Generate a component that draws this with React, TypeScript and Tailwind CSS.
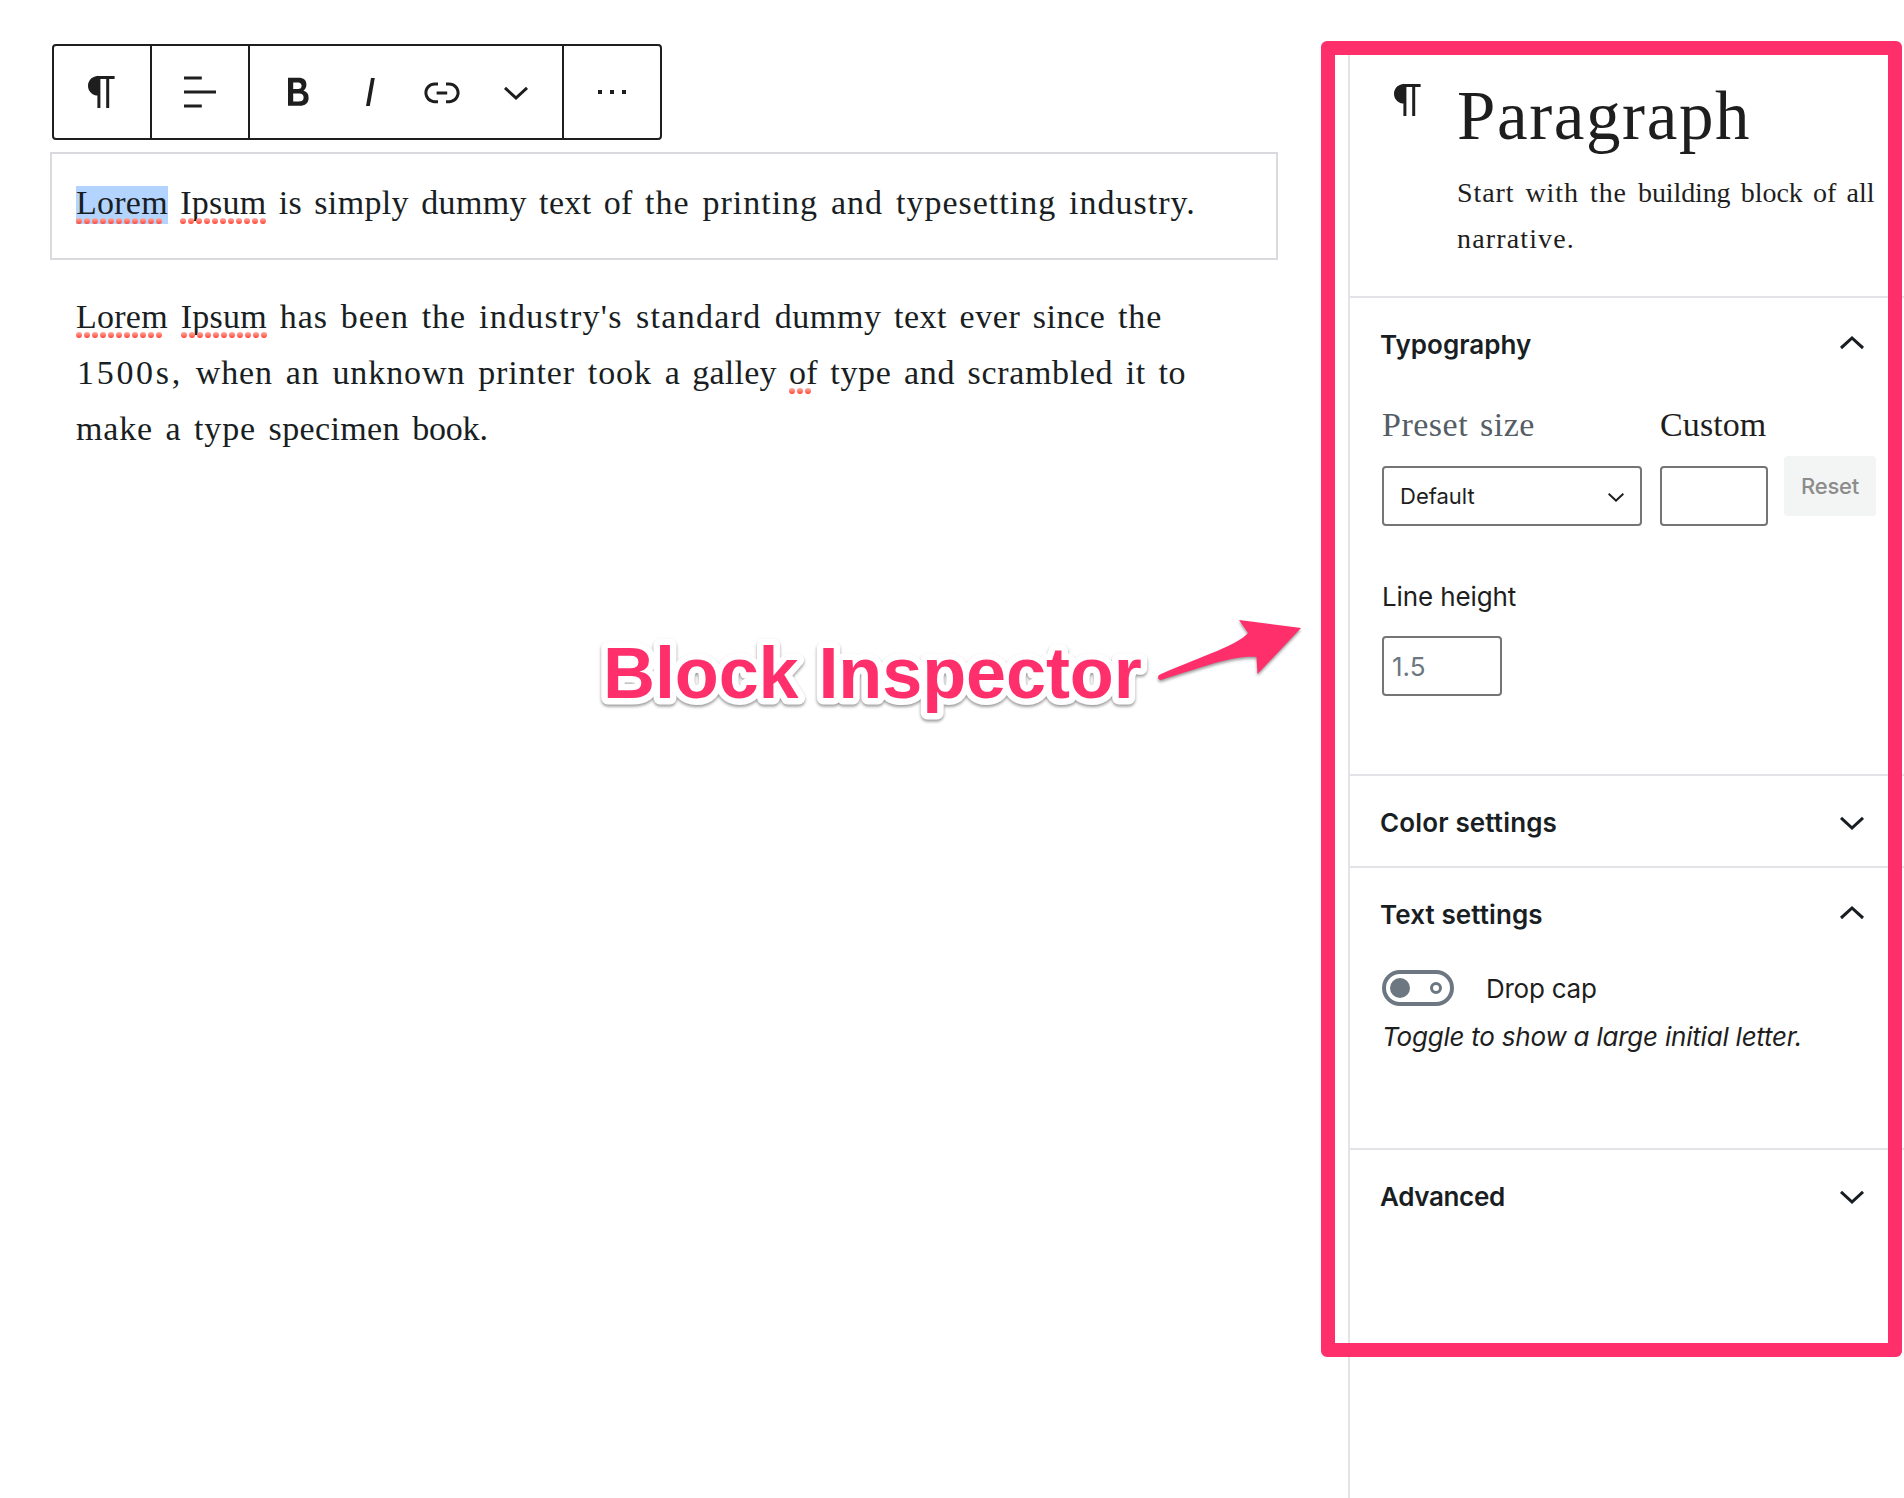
import React from 'react';

const PATHS = {
  paragraph: 'M18.3 4H9.9v-.1l-.9.2c-2.3.4-4 2.4-4 4.8s1.7 4.4 4 4.8l.7.1V20h1.5V5.5h2.9V20h1.5V5.5h2.7V4z',
  align: 'M4 19.8h8.9v-1.5H4v1.5zm8.9-15.6H4v1.5h8.9V4.2zm-8.9 7v1.5h16v-1.5H4z',
  bold: 'M14.7 11.3c1-.6 1.5-1.6 1.5-3 0-2.3-1.3-3.4-4-3.4H7v14h5.8c1.4 0 2.5-.3 3.3-1 .8-.7 1.2-1.7 1.2-2.9.1-1.9-.8-3.1-2.6-3.7zm-5.1-4h2.3c.6 0 1.1.1 1.4.4.3.3.5.7.5 1.2s-.2 1-.5 1.2c-.3.3-.8.4-1.4.4H9.6V7.3zm4.6 9c-.4.3-1 .4-1.7.4H9.6v-3.9h2.9c.7 0 1.3.2 1.7.5.4.3.6.8.6 1.5s-.2 1.2-.6 1.5z',
  italic: 'M12.5 5L10 19h1.9l2.5-14z',
  link: 'M15.6 7.2H14v1.5h1.6c2 0 3.7 1.7 3.7 3.7s-1.7 3.7-3.7 3.7H14v1.5h1.6c2.8 0 5.2-2.3 5.2-5.2 0-2.9-2.3-5.2-5.2-5.2zM4.7 12.4c0-2 1.7-3.7 3.7-3.7H10V7.2H8.4c-2.9 0-5.2 2.3-5.2 5.2 0 2.9 2.3 5.2 5.2 5.2H10v-1.5H8.4c-2 0-3.7-1.7-3.7-3.7zm4.6.9h5.3v-1.5H9.3v1.5z',
  down: 'M17 9.4L12 14 7 9.4l-1 1.1 6 5.5 6-5.5z',
  up: 'M12 8l-6 5.4 1 1.2 5-4.6 5 4.6 1-1.2z',
  more: 'M13 11h-2v2h2v-2zm6 0h-2v2h2v-2zm-12 0H5v2h2v-2z',
};

function Icon({ name, className = 'size-12' }: { name: keyof typeof PATHS; className?: string }) {
  return (
    <svg viewBox="0 0 24 24" fill="currentColor" className={`shrink-0 ${className}`} aria-hidden="true">
      <path d={PATHS[name]} />
    </svg>
  );
}

function ToolButton({ name, className = 'w-[72px]' }: { name: keyof typeof PATHS; className?: string }) {
  return (
    <button type="button" className={`flex h-full items-center justify-center ${className}`}>
      <Icon name={name} />
    </button>
  );
}

function Toolbar() {
  return (
    <div className="ml-[52px] flex h-24 w-[610px] divide-x-2 divide-[#1e1e1e] rounded border-2 border-[#1e1e1e] text-[#1e1e1e]">
      <ToolButton name="paragraph" className="w-[98px]" />
      <ToolButton name="align" className="w-[98px]" />
      <div className="flex w-[314px] pl-3">
        <ToolButton name="bold" />
        <ToolButton name="italic" />
        <ToolButton name="link" />
        <ToolButton name="down" className="w-[76px]" />
      </div>
      <ToolButton name="more" className="flex-1" />
    </div>
  );
}

function Misspelled({ children, dots, selected = false }: { children: string; dots: number; selected?: boolean }) {
  return (
    <span
      className={`relative inline-block pb-[5px] leading-[33px] tracking-[0.25px] [word-spacing:0] ${selected ? 'bg-[#b3d4fe]' : ''}`}
    >
      {children}
      <span className="absolute bottom-0 left-0 flex gap-0.5">
        {Array.from({ length: dots }, (_, i) => (
          <span key={i} className="size-1.5 rounded-full bg-linear-to-b from-[#ffa9a2] to-[#ff3b30]" />
        ))}
      </span>
    </span>
  );
}

function Section({ title, open, tracking = '', className = '', children }: { title: string; open?: boolean; tracking?: string; className?: string; children?: React.ReactNode }) {
  return (
    <section className={className}>
      <div className="flex h-[90px] items-center justify-between pt-0.5 pr-7 pl-[30px] text-[#191e23]">
        <h2 className={`mt-0.5 text-[26px] leading-8 font-semibold ${tracking}`}>{title}</h2>
        <Icon name={open ? 'up' : 'down'} />
      </div>
      {children}
    </section>
  );
}

function Inspector() {
  return (
    <aside className="mt-12 flex flex-1 flex-col border-l-2 border-[#e2e4e7] text-[#1e1e1e]">
      <header className="flex h-[250px] border-b-2 border-[#e2e4e7] pl-[34px] font-['Liberation_Serif',serif]">
        <Icon name="paragraph" className="mt-7 size-12" />
        <div className="ml-[25px] pt-[30px]">
          <h1 className="text-[69px] leading-[76px] tracking-[1.6px]">Paragraph</h1>
          <p className="mt-4 text-[28px] leading-[46px] whitespace-nowrap">
            <span className="block [word-spacing:3.2px]">
              <span className="tracking-[0.9px]">Start with the </span>
              <span className="tracking-[-0.1px]">building </span>
              <span>block of all</span>
            </span>
            <span className="block tracking-[1.15px]">narrative.</span>
          </p>
        </div>
      </header>

      <Section title="Typography" open className="h-[478px] border-b-2 border-[#e2e4e7]">
        <div className="flex pt-[17px] pl-8">
          <div className="w-[260px]">
            <div className="font-['Liberation_Serif',serif] text-[34px] leading-10 tracking-[0.5px] text-[#555d66] [word-spacing:3px]">
              Preset size
            </div>
            <div className="mt-[21px] flex h-[60px] items-center justify-between rounded border-2 border-[#757575] pr-4 pl-4">
              <span className="text-[22px] leading-7">Default</span>
              <svg viewBox="6 9.4 12 6.6" fill="currentColor" className="mt-0.5 h-[9px] w-4" aria-hidden="true">
                <path d={PATHS.down} />
              </svg>
            </div>
          </div>
          <div className="ml-[18px] w-[108px]">
            <div className="font-['Liberation_Serif',serif] text-[34px] leading-10 tracking-[0.1px]">Custom</div>
            <div className="mt-[21px] h-[60px] rounded border-2 border-[#757575]" />
          </div>
          <button
            type="button"
            className="mt-[51px] ml-4 h-[60px] w-[92px] rounded bg-[#f3f4f4] text-[22px] leading-7 font-medium tracking-[-0.2px] text-[#8c8c8c]"
          >
            Reset
          </button>
        </div>
        <div className="pt-[55px] pl-8">
          <div className="text-[26px] leading-8 tracking-[-0.12px]">Line height</div>
          <div className="mt-[23px] flex h-[60px] w-[120px] items-center rounded border-2 border-[#757575] pt-0.5 pl-2 text-[26px] leading-8 text-[#6c7781]">
            1.5
          </div>
        </div>
      </Section>

      <Section title="Color settings" tracking="tracking-[0.15px]" className="h-[92px] border-b-2 border-[#e2e4e7]" />

      <Section title="Text settings" tracking="tracking-[0.1px]" open className="h-[282px] border-b-2 border-[#e2e4e7]">
        <div className="flex items-center pt-3 pl-8">
          <div className="flex h-9 w-[72px] items-center justify-between rounded-full border-4 border-[#6c7781] pr-2 pl-1">
            <span className="size-5 rounded-full bg-[#6c7781]" />
            <span className="size-3 rounded-full border-[3px] border-[#6c7781]" />
          </div>
          <span className="ml-8 pt-0.5 text-[26px] leading-8 tracking-[-0.25px]">Drop cap</span>
        </div>
        <p className="mt-[15px] pl-8 text-[26px] leading-8 tracking-[-0.22px] italic">Toggle to show a large initial letter.</p>
      </Section>

      <Section title="Advanced" tracking="tracking-[-0.35px]" />
    </aside>
  );
}

export default function App() {
  return (
    <div className="relative flex h-[1498px] w-[1904px] overflow-hidden bg-white font-[Inter,sans-serif]">
      <main className="w-[1348px] pt-11">
        <Toolbar />
        <div className="mt-3 ml-[50px] h-[108px] w-[1228px] border-2 border-[#d9dade] pt-[21px] pl-6 font-['Liberation_Serif',serif] text-[34px] leading-[56px] whitespace-nowrap text-[#191e23]">
          <p className="[word-spacing:3.4px]">
            <span className="tracking-[0.35px]">
              <Misspelled dots={11} selected>Lorem</Misspelled> <Misspelled dots={11}>Ipsum</Misspelled>
              {' is simply dummy text of '}
            </span>
            <span className="tracking-[1px]">the printing and typesetting industry.</span>
          </p>
        </div>
        <p className="mt-[29px] ml-[76px] font-['Liberation_Serif',serif] text-[34px] leading-[56px] whitespace-nowrap text-[#191e23] [word-spacing:3.4px]">
          <span className="block tracking-[0.95px]">
            <Misspelled dots={11}>Lorem</Misspelled> <Misspelled dots={11}>Ipsum</Misspelled>
            {' has been the '}
            <span className="tracking-[1.3px]">industry's standard </span>
            <span className="tracking-[0.56px]">dummy text ever since </span>
            the
          </span>
          <span className="block pl-px tracking-[0.65px]">
            <span className="tracking-[2.7px]">1500s,</span>
            <span className="tracking-[0.9px]"> when an unknown printer took </span>
            <span className="tracking-[0.25px]">a galley </span>
            <Misspelled dots={3}>of</Misspelled>
            {' type and scrambled it to'}
          </span>
          <span className="block tracking-[0.37px]">
            <span className="tracking-[0.8px]">make a type </span>specimen <span className="tracking-[-0.2px]">book.</span>
          </span>
        </p>
      </main>

      <Inspector />

      <div className="pointer-events-none absolute top-[41px] left-[1321px] h-[1316px] w-[581px] rounded-md border-14 border-[#ff2f6c]" />

      <svg
        className="pointer-events-none absolute top-[600px] left-[590px] h-[140px] w-[730px] drop-shadow-[0_2px_1.5px_rgba(0,0,0,0.4)]"
        viewBox="590 600 730 140"
        fill="#ff2f6c"
      >
        <text
          x="603"
          y="698"
          className="font-['Liberation_Sans',sans-serif] text-[72px] font-bold tracking-[-0.1px] [paint-order:stroke]"
          stroke="#ffffff"
          strokeWidth="13"
          strokeLinejoin="round"
        >
          Block Inspector
        </text>
        <path d="M1239 620L1301 628L1257.5 674L1256.5 657C1235 655 1205 666 1161 680Q1158 680 1158 677Q1158 675 1161 674C1205 655 1238 645 1248 633Z" />
      </svg>
    </div>
  );
}
